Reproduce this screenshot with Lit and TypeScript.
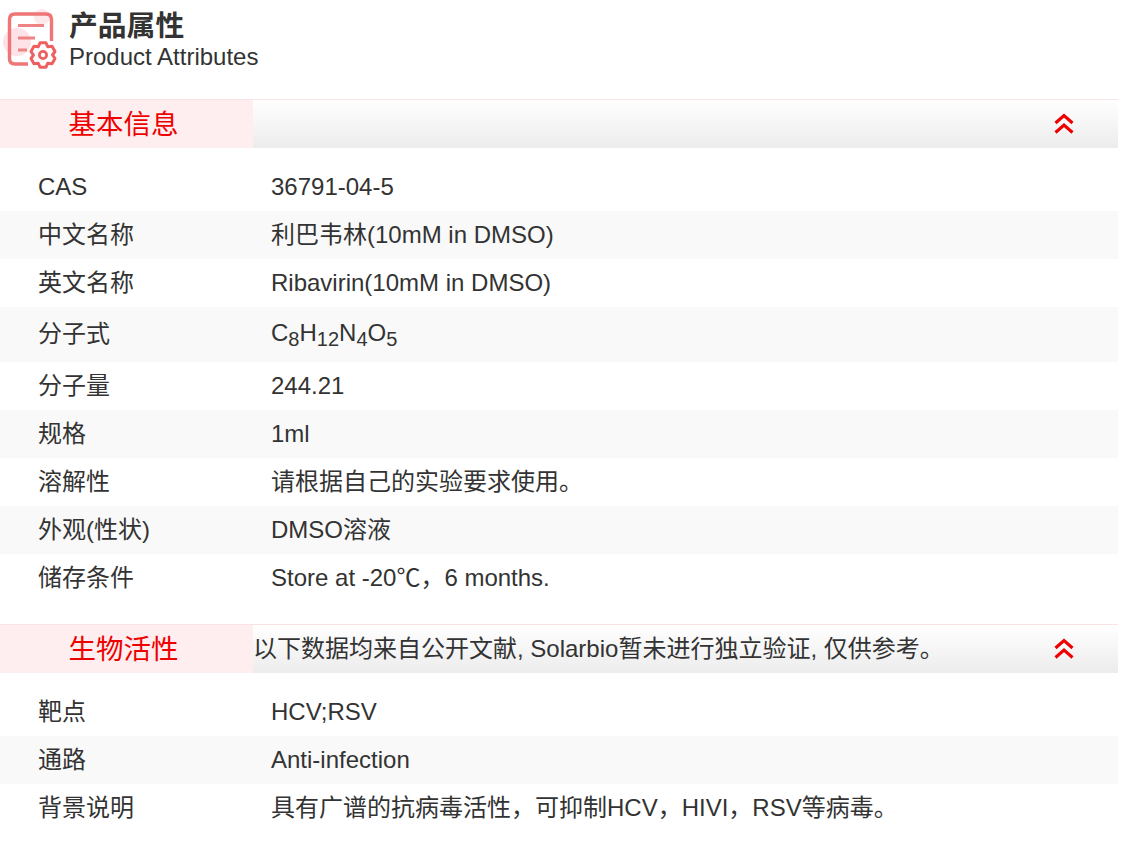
import { LitElement, html, css } from "lit";
import { customElement } from "lit/decorators.js";

const chevrons = html`<svg class="chev" width="22" height="22" viewBox="0 0 22 22" fill="none" stroke="#ee0000" stroke-width="3.1" aria-hidden="true"><path d="M2.5 10 L11 2.5 L19.5 10"/><path d="M2.5 19.5 L11 12 L19.5 19.5"/></svg>`;

function gearPath(cx: number, cy: number, outer: number, inner: number): string {
  const pts: string[] = [];
  for (let i = 0; i < 6; i++) {
    const a = (Math.PI / 3) * i - Math.PI / 2;
    for (const [d, r] of [[-0.24, outer], [0.24, outer], [0.52, inner]] as const) {
      pts.push(`${(cx + r * Math.cos(a + d)).toFixed(2)} ${(cy + r * Math.sin(a + d)).toFixed(2)}`);
    }
  }
  return "M" + pts.join(" L") + " Z";
}

@customElement("app-root")
export class AppRoot extends LitElement {
  static styles = css`
    :host { display: block; width: 1118px; height: 860px; font-family: "Liberation Sans", "Noto Sans CJK SC", sans-serif; font-size: 24px; line-height: 28px; color: #333; background: #fff; }
    .head { display: flex; height: 99px; box-sizing: border-box; padding-top: 8px; }
    .logo { flex: none; margin-right: 9px; filter: blur(0.6px); }
    .titles { display: flex; flex-direction: column; padding-top: 2px; }
    .zh { font-size: 28.8px; font-weight: 700; line-height: 33px; }
    .en { font-size: 24px; line-height: 28px; }
    .bar { display: flex; align-items: center; height: 49px; box-sizing: border-box; border-top: 1px solid #fbe3e3; background: linear-gradient(#ffffff, #ececec); }
    .bar-label { flex: none; width: 253px; height: 48px; box-sizing: border-box; padding-right: 6px; background: #ffeeef; color: #ee0000; font-size: 27.5px; line-height: 50px; text-align: center; }
    .bar-note { flex: 1; font-size: 24px; line-height: 30px; white-space: nowrap; }
    .bar-icon { flex: none; display: flex; margin-right: 43px; }
    .rows { padding: 15px 0 22px; }
    .rows.last { padding-bottom: 0; }
    .row { display: flex; align-items: center; min-height: 48px; }
    .row:nth-child(even) { background: #f9f9f9; }
    .row.tall { min-height: 55px; }
    .k { flex: none; width: 271px; box-sizing: border-box; padding-left: 38px; }
    .v { flex: 1; }
    .tall .k { position: relative; top: -1px; }
    .tall .v { position: relative; top: -2px; }
    sub { font-size: 20px; line-height: 0; vertical-align: -5px; }
  `;

  private row(k: string, v: unknown, tall = false) {
    return html`<div class="row ${tall ? "tall" : ""}"><div class="k">${k}</div><div class="v">${v}</div></div>`;
  }

  render() {
    return html`
      <div class="head">
        <svg class="logo" width="60" height="62" viewBox="0 8 60 62" fill="none" aria-hidden="true">
          <circle cx="17" cy="42" r="14" fill="#fde3e8"/>
          <circle cx="42" cy="17" r="8" fill="#fde8ec"/>
          <path d="M28 64 H15 Q9.5 64 9.5 58.5 V19.5 Q9.5 14 15 14 H46 Q51.5 14 51.5 19.5 V41" stroke="#ee7676" stroke-width="3.4"/>
          <path d="M18 25.5 H44 M18 38 H35 M18 50 H27" stroke="#ee8484" stroke-width="3.2"/>
          <path d="${gearPath(43, 55, 12.5, 9.5)}" stroke="#ee6060" stroke-width="3" stroke-linejoin="round" fill="#fff"/>
          <circle cx="43" cy="55" r="3.6" stroke="#ee6060" stroke-width="2.8"/>
        </svg>
        <div class="titles"><div class="zh">产品属性</div><div class="en">Product Attributes</div></div>
      </div>
      <div class="bar">
        <div class="bar-label">基本信息</div><div class="bar-note"></div><div class="bar-icon">${chevrons}</div>
      </div>
      <div class="rows">
        ${this.row("CAS", "36791-04-5")}
        ${this.row("中文名称", "利巴韦林(10mM in DMSO)")}
        ${this.row("英文名称", "Ribavirin(10mM in DMSO)")}
        ${this.row("分子式", html`C<sub>8</sub>H<sub>12</sub>N<sub>4</sub>O<sub>5</sub>`, true)}
        ${this.row("分子量", "244.21")}
        ${this.row("规格", "1ml")}
        ${this.row("溶解性", "请根据自己的实验要求使用。")}
        ${this.row("外观(性状)", "DMSO溶液")}
        ${this.row("储存条件", "Store at -20℃，6 months.")}
      </div>
      <div class="bar">
        <div class="bar-label">生物活性</div>
        <div class="bar-note">以下数据均来自公开文献, Solarbio暂未进行独立验证, 仅供参考。</div>
        <div class="bar-icon">${chevrons}</div>
      </div>
      <div class="rows last">
        ${this.row("靶点", "HCV;RSV")}
        ${this.row("通路", "Anti-infection")}
        ${this.row("背景说明", "具有广谱的抗病毒活性，可抑制HCV，HIVI，RSV等病毒。")}
      </div>
    `;
  }
}
